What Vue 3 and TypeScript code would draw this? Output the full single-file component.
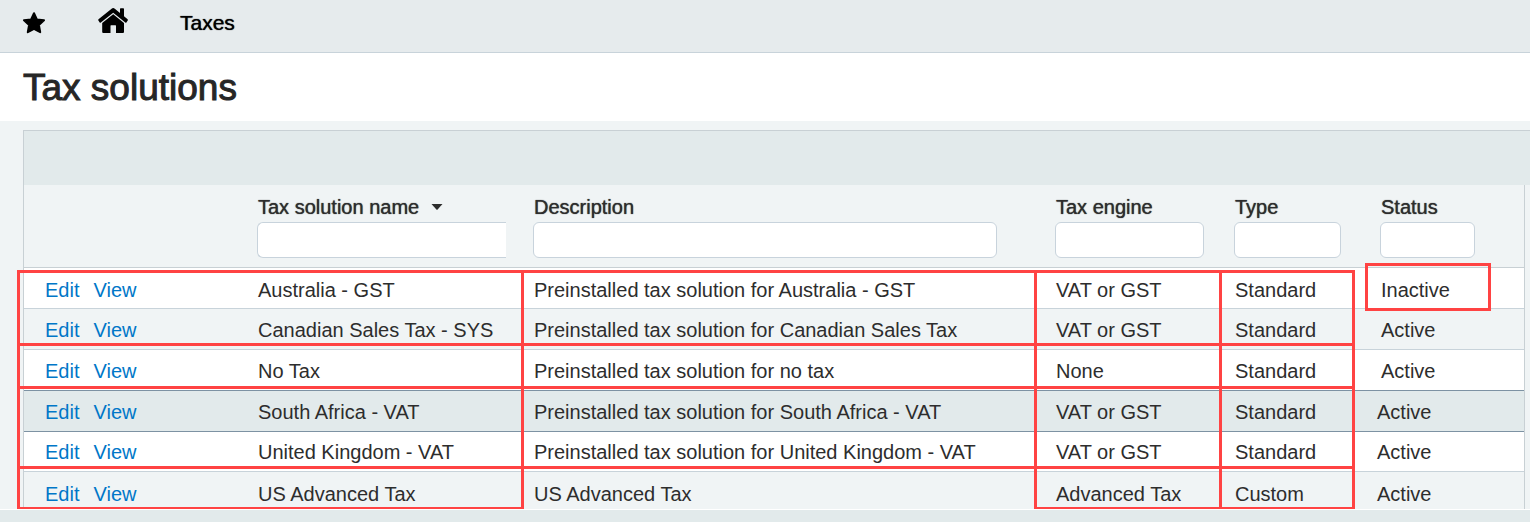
<script setup lang="ts">
interface TaxSolution {
  name: string
  description: string
  engine: string
  type: string
  status: string
  selected?: boolean
  tight?: boolean
}

interface Column {
  key: string
  label: string
  sorted?: boolean
}

const columns: Column[] = [
  { key: 'name', label: 'Tax solution name', sorted: true },
  { key: 'description', label: 'Description' },
  { key: 'engine', label: 'Tax engine' },
  { key: 'type', label: 'Type' },
  { key: 'status', label: 'Status' },
]

const rows: TaxSolution[] = [
  { name: 'Australia - GST', description: 'Preinstalled tax solution for Australia - GST', engine: 'VAT or GST', type: 'Standard', status: 'Inactive' },
  { name: 'Canadian Sales Tax - SYS', description: 'Preinstalled tax solution for Canadian Sales Tax', engine: 'VAT or GST', type: 'Standard', status: 'Active' },
  { name: 'No Tax', description: 'Preinstalled tax solution for no tax', engine: 'None', type: 'Standard', status: 'Active' },
  { name: 'South Africa - VAT', description: 'Preinstalled tax solution for South Africa - VAT', engine: 'VAT or GST', type: 'Standard', status: 'Active', selected: true, tight: true },
  { name: 'United Kingdom - VAT', description: 'Preinstalled tax solution for United Kingdom - VAT', engine: 'VAT or GST', type: 'Standard', status: 'Active', tight: true },
  { name: 'US Advanced Tax', description: 'US Advanced Tax', engine: 'Advanced Tax', type: 'Custom', status: 'Active', tight: true },
]

// Highlight frames laid over the grid: four rows by four columns
const frames = Array.from({ length: 16 }, (_, i) => i)
</script>

<template>
  <div class="page">
    <nav class="topbar">
      <button class="icon-button star" type="button" aria-label="Favorites">
        <svg width="24" height="22" viewBox="0 0 24 22">
          <path d="M12 1.200 L14.900 7.400 L22 8.300 L16.900 13 L18.200 20.200 L12 16.900 L5.800 20.200 L7.100 13 L2 8.300 L9.100 7.400 Z" fill="#000" stroke="#000" stroke-width="2" stroke-linejoin="round" />
        </svg>
      </button>
      <a class="home" href="#" aria-label="Home">
        <svg width="30" height="26" viewBox="0 0 30 26">
          <path d="M15.200 0 Q16 0 16.800 0.700 L22 5 V1 Q22 0.300 22.700 0.300 H25.300 Q26 0.300 26 1 V8.300 L29.600 11.300 Q30.200 12 29.700 12.600 L28.400 14.400 Q27.900 15 27.300 14.500 L15.200 4.700 L2.800 14.500 Q2.200 15 1.700 14.400 L0.400 12.600 Q-0.100 12 0.500 11.300 L13.600 0.700 Q14.400 0 15.200 0 Z" fill="#000" />
          <path d="M15.200 6.300 L26 15 V23.900 Q26 25 24.900 25 H18 V17.700 Q18 17.200 17.500 17.200 H13 Q12.500 17.200 12.500 17.700 V25 H5.300 Q4.200 25 4.200 23.900 V15 Z" fill="#000" />
        </svg>
      </a>
      <a class="crumb" href="#">Taxes</a>
    </nav>

    <header class="heading">
      <h1>Tax solutions</h1>
    </header>

    <main class="content">
      <div class="toolbar"></div>
      <div class="grid-wrap">
        <table>
          <colgroup>
            <col class="w-actions" />
            <col class="w-name" />
            <col />
            <col class="w-engine" />
            <col class="w-type" />
            <col class="w-status" />
          </colgroup>
          <thead>
            <tr>
              <td></td>
              <th v-for="column in columns" :key="column.key" :class="column.key" scope="col">
                <label :for="`filter-${column.key}`">
                  {{ column.label }}
                  <svg v-if="column.sorted" class="caret" width="12" height="6" viewBox="0 0 12 6">
                    <path d="M0.500 0 H11.500 L6.600 5.600 Q6 6.100 5.400 5.600 Z" fill="#2d2d2d" />
                  </svg>
                </label>
                <input :id="`filter-${column.key}`" type="text" />
              </th>
            </tr>
          </thead>
          <tbody>
            <tr v-for="row in rows" :key="row.name" :class="{ selected: row.selected, tight: row.tight }">
              <td class="actions"><a href="#">Edit</a><a href="#">View</a></td>
              <td>{{ row.name }}</td>
              <td>{{ row.description }}</td>
              <td>{{ row.engine }}</td>
              <td>{{ row.type }}</td>
              <td class="status">{{ row.status }}</td>
            </tr>
          </tbody>
        </table>
        <div class="frames" aria-hidden="true">
          <span v-for="n in frames" :key="n" :class="{ last: n > 11, open: n === 13 }"></span>
        </div>
        <div class="status-frame" aria-hidden="true"></div>
      </div>
    </main>
    <footer class="footer"></footer>
  </div>
</template>

<style>
body {
  background: #f0f4f5;
}
</style>

<style scoped>
.page {
  display: flex;
  flex-direction: column;
  min-height: 100vh;
  font-family: "Liberation Sans", Arial, sans-serif;
  font-size: 20px;
  line-height: 24px;
  color: #2d2d2d;
}

.topbar {
  display: flex;
  align-items: center;
  box-sizing: border-box;
  height: 53px;
  padding: 0 22px 6px;
  background: #e6ebed;
  border-bottom: 1px solid #c8d3da;
}

.icon-button {
  display: flex;
  padding: 0;
  border: 0;
  background: none;
}

.home {
  display: flex;
  margin: 0 52px;
  padding-bottom: 5px;
}

.crumb {
  color: #000;
  font-size: 21px;
  text-decoration: none;
  text-shadow: 0 0 1px #000;
}

.heading {
  height: 68px;
  padding: 0 23px;
  background: #fff;
}

h1 {
  margin: 0;
  font-size: 37px;
  line-height: 70px;
  font-weight: 400;
  color: #262626;
  -webkit-text-stroke: 1px #262626;
}

.content {
  padding: 9px 0 0 23px;
  border-bottom: 1px solid #fff;
}

.toolbar {
  height: 54px;
  background: #e2eaeb;
  border-top: 1px solid #c8d0d4;
  border-left: 1px solid #c8d0d4;
}

.grid-wrap {
  position: relative;
  margin-right: 5px;
  border: 1px solid #c8d0d4;
  border-width: 0 1px;
}

table {
  width: 100%;
  table-layout: fixed;
  border-collapse: separate;
  border-spacing: 0;
}

.w-actions { width: 221px; }
.w-name { width: 276px; }
.w-engine { width: 179px; }
.w-type { width: 146px; }
.w-status { width: 156px; }

th,
td {
  box-sizing: border-box;
  padding: 0 0 0 12px;
  text-align: left;
  white-space: nowrap;
}

thead tr > * {
  height: 83px;
  padding-top: 9px;
  padding-bottom: 9px;
  font-weight: 400;
  vertical-align: top;
  border-bottom: 1px solid #c8d0d4;
}

th.name { padding-right: 15px; }
th.description { padding-right: 46px; }
th.engine { padding-right: 18px; }
th.type { padding-right: 27px; }
th.status { padding-right: 49px; }

label {
  display: flex;
  align-items: center;
  height: 26px;
  margin-bottom: 2px;
  padding-left: 1px;
  text-shadow: 0 0 1px #2d2d2d;
}

.caret {
  margin-left: 12px;
}

input {
  display: block;
  box-sizing: border-box;
  width: 100%;
  height: 36px;
  padding: 0 8px;
  border: 1px solid #c8d3dc;
  border-radius: 6px;
  background: #fff;
  font: inherit;
}

th.name input {
  border-right: 0;
  border-radius: 6px 0 0 6px;
}

tbody td {
  height: 41px;
  padding: 1px 0 0 13px;
  border-bottom: 1px solid #c8d3da;
  background: #fff;
}

tbody tr:first-child td {
  padding-top: 3px;
}

tbody tr:nth-child(even) td {
  background: #f0f4f5;
}

tbody tr:nth-child(3) td,
tbody tr.selected td {
  border-bottom-color: #7d92a3;
}

tbody tr.selected td {
  background: #e2eaeb;
}

tbody tr:nth-child(5) td {
  height: 40px;
}

tbody tr:last-child td {
  height: 37px;
  padding-top: 6px;
  border-bottom: 0;
}

tbody td.actions {
  padding-left: 21px;
}

tbody tr.tight td.status {
  padding-left: 9px;
}

.actions a {
  margin-right: 14px;
  color: #0077c8;
  text-decoration: none;
}

.frames {
  position: absolute;
  top: 85px;
  right: 169px;
  bottom: 0;
  left: -7px;
  display: grid;
  grid-template-columns: 504px 1fr 185px 133px;
  grid-template-rows: 73px 43px 80px 1fr;
  border-top: 3px solid #ff4343;
  border-left: 3px solid #ff4343;
  pointer-events: none;
}

.frames span {
  border-right: 3px solid #ff4343;
  border-bottom: 3px solid #ff4343;
}

.frames span.last {
  border-bottom-width: 2px;
}

.frames span.open {
  border-bottom-width: 0;
}

.status-frame {
  position: absolute;
  top: 78px;
  right: 33px;
  box-sizing: border-box;
  width: 126px;
  height: 48px;
  border: 3px solid #ff4343;
  pointer-events: none;
}

.footer {
  flex: 1;
  min-height: 12px;
  background: #e2eaeb;
}
</style>
